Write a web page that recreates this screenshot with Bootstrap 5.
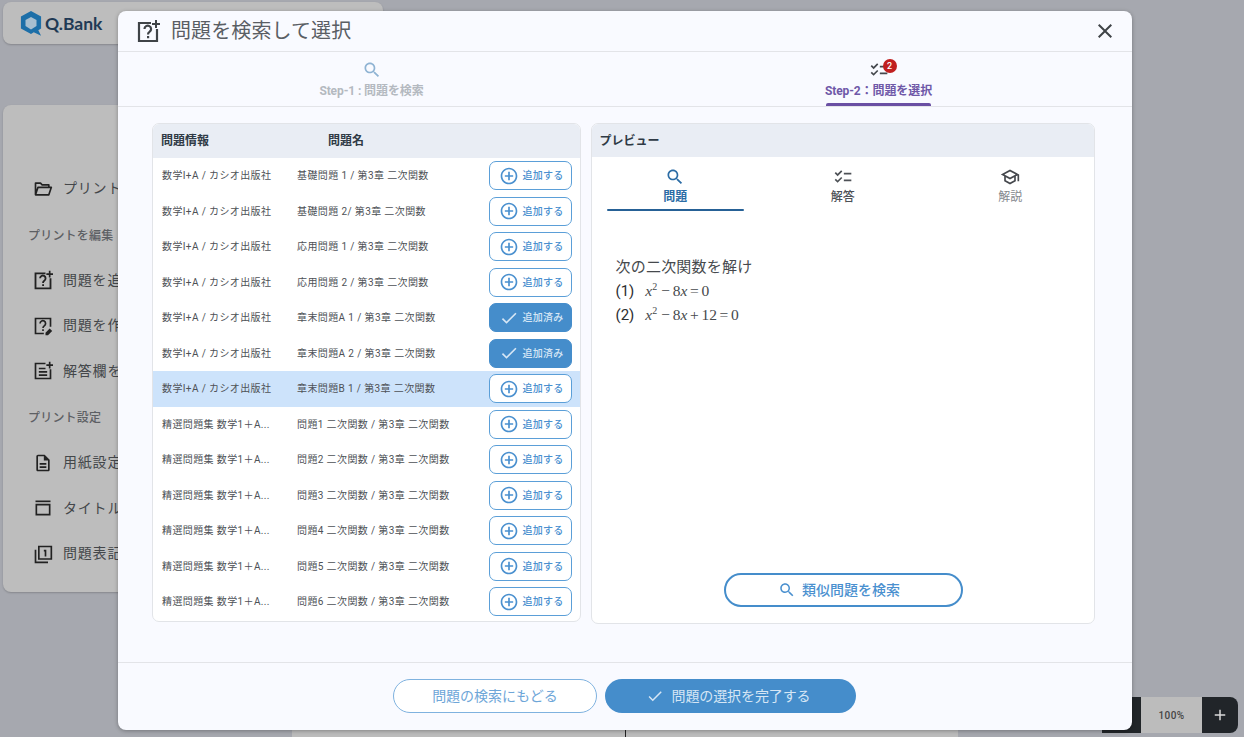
<!DOCTYPE html>
<html lang="ja">
<head>
<meta charset="utf-8">
<title>Q.Bank</title>
<link href="https://cdn.jsdelivr.net/npm/bootstrap@5.3.0/dist/css/bootstrap.min.css" rel="stylesheet">
<style>
html,body{height:100%;}
body{background:#a6a8af;font-family:Roboto,"Noto Sans CJK JP",sans-serif;overflow:hidden;position:relative;color:#3f444a;}
svg{display:block;flex:none;fill:currentColor;}
.bg-head{width:380px;height:42px;margin:2px 0 0 3px;background:#bdbdbd;border-radius:8px;box-shadow:0 1px 2px rgba(0,0,0,.2);padding:0 17px;gap:3px;color:#1f3a55;font:700 17.5px Lato,sans-serif;}
.bg-side{width:400px;height:487px;margin:61px 0 0 3px;background:#bdbdbd;border-radius:8px;box-shadow:0 1px 2px rgba(0,0,0,.2);padding-top:61px;color:#2b2e31;font-size:14px;}
.bg-item{height:45.5px;padding-left:30px;gap:10px;letter-spacing:.8px;color:#44474a;}
.bg-item svg{color:#222;}
.bg-sec{height:46px;padding:2px 0 0 25px;font-size:12px;font-weight:500;color:#5d6064;letter-spacing:.2px;}
.bg-paper{position:absolute;left:292px;top:728px;width:666px;height:12px;background:#bcbcbc;}
.bg-paper i{position:absolute;left:333px;top:0;width:1px;height:12px;background:#222;}
.zoombar{position:absolute;right:6px;top:697px;height:36px;width:136px;border-radius:0 8px 8px 0;overflow:hidden;font-size:10px;}
.zoombar>div{background:#212529;width:36px;color:#d9d9d9;}
.zoombar>.zoom-pad{width:39px;}
.zoombar>.zoom-val{background:#bcbcbc;width:61px;color:#444;font-weight:500;letter-spacing:.4px;}
.sheet{position:absolute;left:118px;top:11px;width:1014px;height:719px;background:#f9faff;border-radius:8px;border:0;box-shadow:0 1px 4px rgba(0,0,0,.3);display:flex;flex-direction:column;overflow:hidden;}
.sheet-head{height:41px;border-bottom:1.5px solid #e3e4e8;padding:0 15px 0 18px;color:#3f4347;}
.sheet-title{font-size:20px;margin:0 0 0 11px;font-weight:400;line-height:1;color:#5a5e64;letter-spacing:.1px;}
.steps{height:55px;border-bottom:1.5px solid #e3e4e8;}
.step-one{width:50%;padding-top:8px;color:#b4b9c0;font-size:12px;font-weight:700;position:relative;}
.step-one svg{color:#8fb3d3;}
.step-one.active{color:#6f58a8;}
.step-one.active svg{color:#45484d;}
.step-one.active::after{content:"";position:absolute;left:201px;width:105px;bottom:0;height:3px;background:#6a4fa3;border-radius:2px 2px 0 0;}
.step-label{line-height:14px;letter-spacing:-.1px;}
.step-ic{position:relative;}
.pin{position:absolute;left:14px;top:-1px;width:14px;height:14px;border-radius:50%;background:#c01f1f;color:#fff;font-size:9px;font-weight:500;line-height:14px;text-align:center;}
.sheet-body{flex:1;padding:16px 37px 0 34px;gap:10px;}
.box{border:1px solid #e2e4e8;border-radius:7px;background:#fff;overflow:hidden;}
.box-list{width:429px;height:499px;}
.box-view{width:505px;height:501px;}
.box-top{height:33px;background:#e9edf4;font-size:12px;font-weight:700;color:#2f3a45;padding-left:8px;}
.box-list .box-top{height:34px;}
.col-info{width:167px;}
.qrow{height:35.5px;padding:0 8px 0 9px;font-size:10px;color:#4d5156;letter-spacing:.38px;}
.qrow.picked{background:#cde3fb;}
.q-a{width:135px;white-space:nowrap;}
.q-b{flex:1;white-space:nowrap;}
.q-btn{width:83px;height:29px;border:1px solid #5b9fd8;border-radius:7px;background:#fff;color:#4a90cf;font-size:10px;font-weight:500;padding:0 0 0 9px;gap:4px;letter-spacing:.2px;}
.q-btn.done{background:#458dcb;border-color:#458dcb;color:#d6e6f5;}
.tabs-row{height:65px;}
.tab-one{width:168px;padding-top:10px;font-size:12px;font-weight:500;color:#4d5156;position:relative;line-height:16px;}
.tab-one svg{margin-bottom:2px;}
.tab-one.active{color:#2b6ca5;font-weight:700;}
.tab-one.active::after{content:"";position:absolute;left:15px;right:15px;bottom:11px;height:2px;background:#266196;border-radius:2px;}
.tab-one.dim{color:#84888d;font-weight:400;}
.tab-one.dim svg{color:#45484d;}
.prob{padding:33px 24px 0;font-size:15px;line-height:24px;color:#46494d;font-weight:400;letter-spacing:.2px;}
.prob b{font-weight:400;color:#2b2e31;margin-right:11px;letter-spacing:0;}
.mth{font-family:"Liberation Serif",serif;font-size:15.5px;word-spacing:-1.200px;letter-spacing:0;}
.mth sup{font-size:10px;top:-.6em;margin-right:4px;}
.similar{width:239px;height:34px;border:2px solid #458dcb;border-radius:17px;background:#fff;color:#4a90cf;font-size:14px;font-weight:500;gap:6px;padding:0 8px 0 0;margin:0 0 16px 132px;}
.sheet-foot{height:68px;border-top:1.5px solid #e3e4e8;padding:16px 0 0 275px;gap:8px;}
.pill-a,.pill-b{height:34px;border-radius:17px;font-size:14px;padding:0;}
.pill-a{width:204px;border:1px solid #7fb2df;background:#fff;color:#6ea6d8;}
.pill-b{width:251px;border:0;background:#458dcb;color:#d6e6f5;gap:8px;letter-spacing:-.1px;padding-right:5px;}
</style>
</head>
<body>
<svg width="0" height="0" class="position-absolute">
<symbol id="i-search" viewBox="0 0 24 24"><path d="M15.5 14h-.79l-.28-.27C15.41 12.59 16 11.11 16 9.5 16 5.91 13.09 3 9.5 3S3 5.91 3 9.5 5.91 16 9.5 16c1.61 0 3.09-.59 4.23-1.57l.27.28v.79l5 4.99L20.49 19l-4.99-5zm-6 0C7.01 14 5 11.99 5 9.5S7.01 5 9.5 5 14 7.01 14 9.5 11.99 14 9.5 14z"/></symbol>
<symbol id="i-close" viewBox="0 0 24 24"><path d="M19 6.41 17.59 5 12 10.59 6.41 5 5 6.41 10.59 12 5 17.59 6.41 19 12 13.41 17.59 19 19 17.59 13.41 12z"/></symbol>
<symbol id="i-check" viewBox="0 0 24 24"><path d="M9 16.17 4.83 12l-1.42 1.41L9 19 21 7l-1.41-1.41z"/></symbol>
<symbol id="i-add" viewBox="0 0 24 24"><path d="M13 7h-2v4H7v2h4v4h2v-4h4v-2h-4V7zm-1-5C6.48 2 2 6.48 2 12s4.48 10 10 10 10-4.48 10-10S17.52 2 12 2zm0 18c-4.41 0-8-3.59-8-8s3.59-8 8-8 8 3.59 8 8-3.59 8-8 8z"/></symbol>
<symbol id="i-list" viewBox="0 0 24 24"><path d="M22 7h-9v2h9V7zm0 8h-9v2h9v-2zM5.54 11 2 7.46l1.41-1.41 2.12 2.12 4.24-4.24 1.41 1.41L5.54 11zm0 8L2 15.46l1.41-1.41 2.12 2.12 4.24-4.24 1.41 1.41L5.54 19z"/></symbol>
<symbol id="i-school" viewBox="0 0 24 24"><path d="M12 3 1 9l4 2.18v6L12 21l7-3.82v-6l2-1.09V17h2V9L12 3zm6.82 6L12 12.72 5.18 9 12 5.28 18.82 9zM17 15.99l-5 2.73-5-2.73v-3.72L12 15l5-2.73v3.72z"/></symbol>
<symbol id="i-qadd" viewBox="0 0 24 24"><path fill="none" stroke="currentColor" stroke-width="2.2" d="M15 4H3v18h18V10"/><path fill="none" stroke="currentColor" stroke-width="2.2" d="M8.500 10a3.300 3.300 0 1 1 5 2.800c-1.200.8-1.500 1.300-1.500 2.700"/><path d="M11 17h2.200v2.200H11zM19 1h2v3h3v2h-3v3h-2V6h-3V4h3z"/></symbol>
<symbol id="i-qedit" viewBox="0 0 24 24"><path fill="none" stroke="currentColor" stroke-width="2" d="M13 21H3V3h18v10"/><path fill="none" stroke="currentColor" stroke-width="2" d="M8.500 9a3.300 3.300 0 1 1 5 2.800c-1.200.8-1.500 1.300-1.500 2.700"/><path d="M11 16h2v2h-2zM15 23v-3l5-5 3 3-5 5z"/></symbol>
<symbol id="i-ansadd" viewBox="0 0 24 24"><path fill="none" stroke="currentColor" stroke-width="2" d="M15 3H3v18h18V10"/><path d="M7 8h8v2H7zM7 12h10v2H7zM7 16h10v2H7zM19 1h2v3h3v2h-3v3h-2V6h-3V4h3z"/></symbol>
<symbol id="i-doc" viewBox="0 0 24 24"><path d="M8 16h8v2H8zm0-4h8v2H8zm6-10H6c-1.100 0-2 .9-2 2v16c0 1.100.89 2 1.990 2H18c1.100 0 2-.9 2-2V8l-6-6zm4 18H6V4h7v5h5v11z"/></symbol>
<symbol id="i-title" viewBox="0 0 24 24"><path d="M3 3h18v2H3z"/><path fill="none" stroke="currentColor" stroke-width="2" d="M4 8h16v12H4z"/></symbol>
<symbol id="i-num" viewBox="0 0 24 24"><path fill="none" stroke="currentColor" stroke-width="2" d="M7 3h15v15H7zM3 7v15h15"/><path d="M13 7h3v8h-2V9h-1z"/></symbol>
<symbol id="i-folder" viewBox="0 0 24 24"><path fill="none" stroke="currentColor" stroke-width="2" stroke-linejoin="round" d="M3 19V5h6l2 2h8v3M3 19l3-9h16l-3 9z"/></symbol>
</svg>

<div class="bg-head d-flex align-items-center">
  <svg width="22" height="26" viewBox="0 0 24 28"><path fill="#1d6fa8" d="M12 1 23 7v13l-3 1.800L23 28l-8-4-3 2L1 20V7z"/><path fill="#a8bfd0" d="M12 7.500l6 3.300v6.600L12 21l-6-3.600v-6.600z"/></svg>
  <span>Q.Bank</span>
</div>
<div class="bg-side">
  <div class="bg-item d-flex align-items-center"><svg width="20" height="20"><use href="#i-folder"/></svg>プリントを開く</div>
  <div class="bg-sec d-flex align-items-center">プリントを編集</div>
  <div class="bg-item d-flex align-items-center"><svg width="20" height="20"><use href="#i-qadd"/></svg>問題を追加</div>
  <div class="bg-item d-flex align-items-center"><svg width="20" height="20"><use href="#i-qedit"/></svg>問題を作成</div>
  <div class="bg-item d-flex align-items-center"><svg width="20" height="20"><use href="#i-ansadd"/></svg>解答欄を追加</div>
  <div class="bg-sec d-flex align-items-center">プリント設定</div>
  <div class="bg-item d-flex align-items-center"><svg width="20" height="20"><use href="#i-doc"/></svg>用紙設定</div>
  <div class="bg-item d-flex align-items-center"><svg width="20" height="20"><use href="#i-title"/></svg>タイトル</div>
  <div class="bg-item d-flex align-items-center"><svg width="20" height="20"><use href="#i-num"/></svg>問題表記</div>
</div>
<div class="bg-paper"><i></i></div>
<div class="zoombar d-flex">
  <div class="zoom-pad"></div>
  <div class="zoom-val d-flex align-items-center justify-content-center">100%</div>
  <div class="d-flex align-items-center justify-content-center"><svg width="18" height="18" viewBox="0 0 24 24"><path d="M19 13h-6v6h-2v-6H5v-2h6V5h2v6h6z"/></svg></div>
</div>

<div class="sheet">
  <div class="sheet-head d-flex align-items-center">
    <svg width="24" height="24"><use href="#i-qadd"/></svg>
    <h5 class="sheet-title flex-grow-1">問題を検索して選択</h5>
    <svg width="24" height="24"><use href="#i-close"/></svg>
  </div>
  <div class="steps d-flex">
    <div class="step-one d-flex flex-column align-items-center">
      <svg width="20" height="20"><use href="#i-search"/></svg>
      <div class="step-label mt-1">Step-1 : 問題を検索</div>
    </div>
    <div class="step-one active d-flex flex-column align-items-center">
      <div class="step-ic"><svg width="20" height="20"><use href="#i-list"/></svg><span class="pin">2</span></div>
      <div class="step-label mt-1">Step-2：問題を選択</div>
    </div>
  </div>
  <div class="sheet-body d-flex align-items-start">
    <div class="box box-list">
      <div class="box-top d-flex align-items-center"><span class="col-info">問題情報</span><span>問題名</span></div>
      <div class="qrow d-flex align-items-center"><span class="q-a">数学I+A / カシオ出版社</span><span class="q-b">基礎問題 1 / 第3章 二次関数</span><button class="q-btn d-flex align-items-center"><svg width="20" height="20"><use href="#i-add"/></svg>追加する</button></div>
      <div class="qrow d-flex align-items-center"><span class="q-a">数学I+A / カシオ出版社</span><span class="q-b">基礎問題 2/ 第3章 二次関数</span><button class="q-btn d-flex align-items-center"><svg width="20" height="20"><use href="#i-add"/></svg>追加する</button></div>
      <div class="qrow d-flex align-items-center"><span class="q-a">数学I+A / カシオ出版社</span><span class="q-b">応用問題 1 / 第3章 二次関数</span><button class="q-btn d-flex align-items-center"><svg width="20" height="20"><use href="#i-add"/></svg>追加する</button></div>
      <div class="qrow d-flex align-items-center"><span class="q-a">数学I+A / カシオ出版社</span><span class="q-b">応用問題 2 / 第3章 二次関数</span><button class="q-btn d-flex align-items-center"><svg width="20" height="20"><use href="#i-add"/></svg>追加する</button></div>
      <div class="qrow d-flex align-items-center"><span class="q-a">数学I+A / カシオ出版社</span><span class="q-b">章末問題A 1 / 第3章 二次関数</span><button class="q-btn done d-flex align-items-center"><svg width="20" height="20"><use href="#i-check"/></svg>追加済み</button></div>
      <div class="qrow d-flex align-items-center"><span class="q-a">数学I+A / カシオ出版社</span><span class="q-b">章末問題A 2 / 第3章 二次関数</span><button class="q-btn done d-flex align-items-center"><svg width="20" height="20"><use href="#i-check"/></svg>追加済み</button></div>
      <div class="qrow picked d-flex align-items-center"><span class="q-a">数学I+A / カシオ出版社</span><span class="q-b">章末問題B 1 / 第3章 二次関数</span><button class="q-btn d-flex align-items-center"><svg width="20" height="20"><use href="#i-add"/></svg>追加する</button></div>
      <div class="qrow d-flex align-items-center"><span class="q-a">精選問題集 数学1＋A...</span><span class="q-b">問題1 二次関数 / 第3章 二次関数</span><button class="q-btn d-flex align-items-center"><svg width="20" height="20"><use href="#i-add"/></svg>追加する</button></div>
      <div class="qrow d-flex align-items-center"><span class="q-a">精選問題集 数学1＋A...</span><span class="q-b">問題2 二次関数 / 第3章 二次関数</span><button class="q-btn d-flex align-items-center"><svg width="20" height="20"><use href="#i-add"/></svg>追加する</button></div>
      <div class="qrow d-flex align-items-center"><span class="q-a">精選問題集 数学1＋A...</span><span class="q-b">問題3 二次関数 / 第3章 二次関数</span><button class="q-btn d-flex align-items-center"><svg width="20" height="20"><use href="#i-add"/></svg>追加する</button></div>
      <div class="qrow d-flex align-items-center"><span class="q-a">精選問題集 数学1＋A...</span><span class="q-b">問題4 二次関数 / 第3章 二次関数</span><button class="q-btn d-flex align-items-center"><svg width="20" height="20"><use href="#i-add"/></svg>追加する</button></div>
      <div class="qrow d-flex align-items-center"><span class="q-a">精選問題集 数学1＋A...</span><span class="q-b">問題5 二次関数 / 第3章 二次関数</span><button class="q-btn d-flex align-items-center"><svg width="20" height="20"><use href="#i-add"/></svg>追加する</button></div>
      <div class="qrow d-flex align-items-center"><span class="q-a">精選問題集 数学1＋A...</span><span class="q-b">問題6 二次関数 / 第3章 二次関数</span><button class="q-btn d-flex align-items-center"><svg width="20" height="20"><use href="#i-add"/></svg>追加する</button></div>
    </div>
    <div class="box box-view d-flex flex-column">
      <div class="box-top d-flex align-items-center">プレビュー</div>
      <div class="tabs-row d-flex">
        <div class="tab-one active d-flex flex-column align-items-center"><svg width="20" height="20"><use href="#i-search"/></svg>問題</div>
        <div class="tab-one d-flex flex-column align-items-center"><svg width="20" height="20"><use href="#i-list"/></svg>解答</div>
        <div class="tab-one dim d-flex flex-column align-items-center"><svg width="20" height="20"><use href="#i-school"/></svg>解説</div>
      </div>
      <div class="prob flex-grow-1">
        <div>次の二次関数を解け</div>
        <div class="d-flex"><b>(1)</b><span class="mth"><i>x</i><sup>2</sup>− 8<i>x</i> = 0</span></div>
        <div class="d-flex"><b>(2)</b><span class="mth"><i>x</i><sup>2</sup>− 8<i>x</i> + 12 = 0</span></div>
      </div>
      <button class="similar d-flex align-items-center justify-content-center"><svg width="18" height="18"><use href="#i-search"/></svg>類似問題を検索</button>
    </div>
  </div>
  <div class="sheet-foot d-flex align-items-start">
    <button class="pill-a">問題の検索にもどる</button>
    <button class="pill-b d-flex align-items-center justify-content-center"><svg width="18" height="18"><use href="#i-check"/></svg>問題の選択を完了する</button>
  </div>
</div>
<script src="https://cdn.jsdelivr.net/npm/bootstrap@5.3.0/dist/js/bootstrap.bundle.min.js"></script>
</body>
</html>
